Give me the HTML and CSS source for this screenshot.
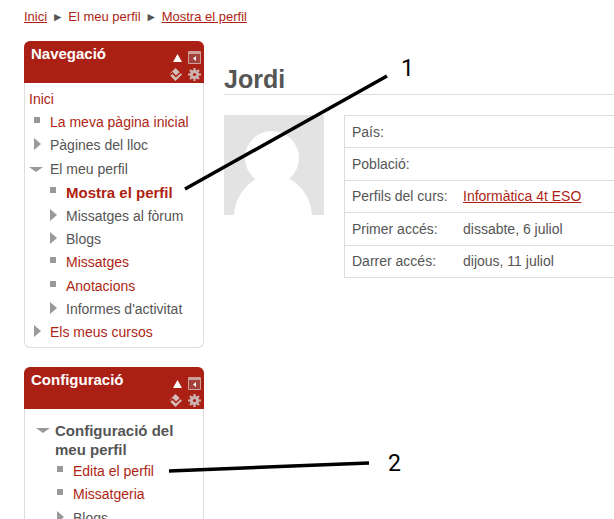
FILE: index.html
```html
<!DOCTYPE html>
<html>
<head>
  <title>Jordi: Perfil</title>
  <link rel="stylesheet" href="styles.css">
</head>
<body>
  <div class="breadcrumb">
    <a href="#" class="underlined">Inici</a>
    <span class="sep">&#9658;</span>
    <a href="#">El meu perfil</a>
    <span class="sep">&#9658;</span>
    <a href="#" class="underlined">Mostra el perfil</a>
  </div>

  <div class="layout">
    <div class="sidebar">
      <div class="block">
        <div class="block-header">
          <div class="block-title">Navegació</div>
          <div class="block-icons">
            <div class="icon-row">
              <svg width="9" height="10" viewBox="0 0 9 10"><path d="M0 9 L4.500 1 L9 9 Z" fill="#fff"/></svg>
              <svg width="13" height="13" viewBox="0 0 13 13"><path d="M.5 .5 H12.500 V12.500 H.5 Z" fill="#a4413a" stroke="#cf9f99"/><path d="M1 1 H12 V3 H1 Z" fill="#cf9f99"/><path d="M8 5 L5 7.500 L8 10 Z" fill="#fff"/></svg>
            </div>
            <div class="icon-row">
              <svg width="13" height="13" viewBox="0 0 13 13"><path d="M0 6.500 L6.500 0 L13 6.500 L6.500 13 Z" fill="#d3bdb9"/><path d="M0 7.500 L3.500 5 L7 8.500 L12 4" fill="none" stroke="#ab2014" stroke-width="1.600"/></svg>
              <svg width="13" height="13" viewBox="0 0 13 13"><path d="M6.500 0 V13 M0 6.500 H13 M2 2 L11 11 M11 2 L2 11" stroke="#cbb4b0" stroke-width="2.200"/><circle cx="6.500" cy="6.500" r="3.400" fill="none" stroke="#cbb4b0" stroke-width="2.400"/><circle cx="6.500" cy="6.500" r="1.600" fill="#a82015"/></svg>
            </div>
          </div>
        </div>
        <div class="block-body nav-body">
          <div class="nav-home"><a href="#">Inici</a></div>
          <ul class="tree">
            <li class="leaf"><a href="#">La meva pàgina inicial</a></li>
            <li class="closed">Pàgines del lloc</li>
            <li class="open">El meu perfil
              <ul class="tree">
                <li class="leaf"><a href="#" class="current">Mostra el perfil</a></li>
                <li class="closed">Missatges al fòrum</li>
                <li class="closed">Blogs</li>
                <li class="leaf"><a href="#">Missatges</a></li>
                <li class="leaf"><a href="#">Anotacions</a></li>
                <li class="closed">Informes d'activitat</li>
              </ul>
            </li>
            <li class="closed"><a href="#">Els meus cursos</a></li>
          </ul>
        </div>
      </div>

      <div class="block">
        <div class="block-header">
          <div class="block-title">Configuració</div>
          <div class="block-icons">
            <div class="icon-row">
              <svg width="9" height="10" viewBox="0 0 9 10"><path d="M0 9 L4.500 1 L9 9 Z" fill="#fff"/></svg>
              <svg width="13" height="13" viewBox="0 0 13 13"><path d="M.5 .5 H12.500 V12.500 H.5 Z" fill="#a4413a" stroke="#cf9f99"/><path d="M1 1 H12 V3 H1 Z" fill="#cf9f99"/><path d="M8 5 L5 7.500 L8 10 Z" fill="#fff"/></svg>
            </div>
            <div class="icon-row">
              <svg width="13" height="13" viewBox="0 0 13 13"><path d="M0 6.500 L6.500 0 L13 6.500 L6.500 13 Z" fill="#d3bdb9"/><path d="M0 7.500 L3.500 5 L7 8.500 L12 4" fill="none" stroke="#ab2014" stroke-width="1.600"/></svg>
              <svg width="13" height="13" viewBox="0 0 13 13"><path d="M6.500 0 V13 M0 6.500 H13 M2 2 L11 11 M11 2 L2 11" stroke="#cbb4b0" stroke-width="2.200"/><circle cx="6.500" cy="6.500" r="3.400" fill="none" stroke="#cbb4b0" stroke-width="2.400"/><circle cx="6.500" cy="6.500" r="1.600" fill="#a82015"/></svg>
            </div>
          </div>
        </div>
        <div class="block-body settings-body">
          <div class="settings-title">Configuració del meu perfil</div>
          <ul class="tree">
            <li class="leaf"><a href="#">Edita el perfil</a></li>
            <li class="leaf"><a href="#">Missatgeria</a></li>
            <li class="closed">Blogs</li>
          </ul>
        </div>
      </div>
    </div>

    <div class="content">
      <h2 class="user-name">Jordi</h2>
      <div class="profile">
        <svg class="avatar" width="100" height="100" viewBox="0 0 100 100">
          <rect width="100" height="100" fill="#e3e3e3"/>
          <circle cx="48" cy="43" r="27" fill="#fff"/>
          <path d="M10 100 C11 84 20 70 34 63 H64 C78 70 87 84 88 100 Z" fill="#fff"/>
        </svg>
        <table class="details">
          <tr><td class="label">País:</td><td></td></tr>
          <tr><td class="label">Població:</td><td></td></tr>
          <tr><td class="label">Perfils del curs:</td><td><a href="#" class="underlined">Informàtica 4t ESO</a></td></tr>
          <tr><td class="label">Primer accés:</td><td>dissabte, 6 juliol</td></tr>
          <tr><td class="label">Darrer accés:</td><td>dijous, 11 juliol</td></tr>
        </table>
      </div>
    </div>
  </div>

  <!-- annotations drawn over the screenshot -->
  <svg class="marks" width="614" height="519" viewBox="0 0 614 519">
    <path d="M185 189 L387 76" stroke="#000" stroke-width="3.500" fill="none"/>
    <path d="M169 471 L369 463" stroke="#000" stroke-width="3.500" fill="none"/>
  </svg>
  <div class="mark-num mark-one">1</div>
  <div class="mark-num mark-two">2</div>
</body>
</html>
```

FILE: styles.css
```css
html, body {
  height: 519px;
  overflow: hidden;
}

body {
  margin: 0;
  font-family: "Liberation Sans", Arial, sans-serif;
  font-size: 14px;
  line-height: 23.2px;
  color: #555;
  background-color: #fff;
  position: relative;
}

a {
  color: #ae1f14;
  text-decoration: none;
}

.underlined {
  text-decoration: underline;
}

.breadcrumb {
  padding: 7px 0 0 24px;
  height: 41px;
  box-sizing: border-box;
  font-size: 13px;
  line-height: 20px;
}

.sep {
  color: #555;
  font-size: 12px;
  margin: 0 1px;
}

.layout {
  display: flex;
}

.sidebar {
  width: 180px;
  margin-left: 24px;
  flex-shrink: 0;
}

.block {
  margin-bottom: 19px;
}

.block-header {
  height: 42px;
  background-color: #ab2014;
  border-radius: 6px 6px 0 0;
  display: flex;
  justify-content: space-between;
  padding: 0 3px 0 7px;
}

.block-title {
  color: #fff;
  font-size: 15px;
  font-weight: bold;
  padding-top: 1px;
}

.block-icons {
  padding-top: 8px;
}

.icon-row {
  display: flex;
  justify-content: flex-end;
  align-items: center;
  gap: 4px;
  height: 17px;
}

.icon-row svg + svg {
  margin-left: 2px;
}

.block-body {
  border: 1px solid #ddd;
  border-top: none;
  border-radius: 0 0 6px 6px;
}

.nav-body {
  padding: 5px 0 3px 4px;
}

.settings-body {
  padding: 12px 0 0 30px;
}

.settings-title {
  position: relative;
  font-size: 15px;
  font-weight: bold;
  line-height: 19px;
  padding-right: 10px;
  margin-bottom: 1px;
}

.settings-title::before {
  content: "";
  position: absolute;
  left: -19px;
  top: 7px;
  border-top: 5px solid #999;
  border-left: 7px solid transparent;
  border-right: 7px solid transparent;
}

.tree {
  list-style: none;
  margin: 0;
  padding: 0 0 0 21px;
}

.tree .tree {
  padding-left: 16px;
}

.settings-body > .tree {
  padding-left: 18px;
}

.tree li {
  position: relative;
}

.tree li::before {
  content: "";
  position: absolute;
}

.leaf::before {
  left: -16px;
  top: 6px;
  width: 6px;
  height: 6px;
  background-color: #999;
}

.closed::before {
  left: -16px;
  top: 4px;
  border-left: 7px solid #999;
  border-top: 6px solid transparent;
  border-bottom: 6px solid transparent;
}

.open::before {
  left: -21px;
  top: 9px;
  border-top: 5px solid #999;
  border-left: 7px solid transparent;
  border-right: 7px solid transparent;
}

.current {
  font-size: 15px;
  font-weight: bold;
}

.content {
  flex: 1;
  margin-left: 20px;
  min-width: 0;
}

.user-name {
  margin: 0;
  height: 54px;
  padding-top: 23px;
  box-sizing: border-box;
  font-size: 25px;
  line-height: 30px;
  font-weight: bold;
  color: #555;
  border-bottom: 1px solid #ddd;
}

.profile {
  display: flex;
  gap: 20px;
  margin-top: 20px;
}

.avatar {
  flex-shrink: 0;
}

.details {
  border-collapse: collapse;
  width: 300px;
  flex-shrink: 0;
  align-self: flex-start;
}

.details td {
  border: 1px solid #ddd;
  border-left: none;
  border-right: none;
  height: 31.4px;
  padding: 0;
  line-height: 20px;
}

.details td.label {
  border-left: 1px solid #ddd;
  width: 111px;
  padding-left: 7px;
}

.marks {
  position: absolute;
  left: 0;
  top: 0;
}

.mark-num {
  position: absolute;
  font-family: Roboto, "Liberation Sans", sans-serif;
  font-size: 23px;
  line-height: 24px;
  color: #000;
}

.mark-one {
  left: 401px;
  top: 57px;
}

.mark-two {
  left: 388px;
  top: 452px;
}
```
